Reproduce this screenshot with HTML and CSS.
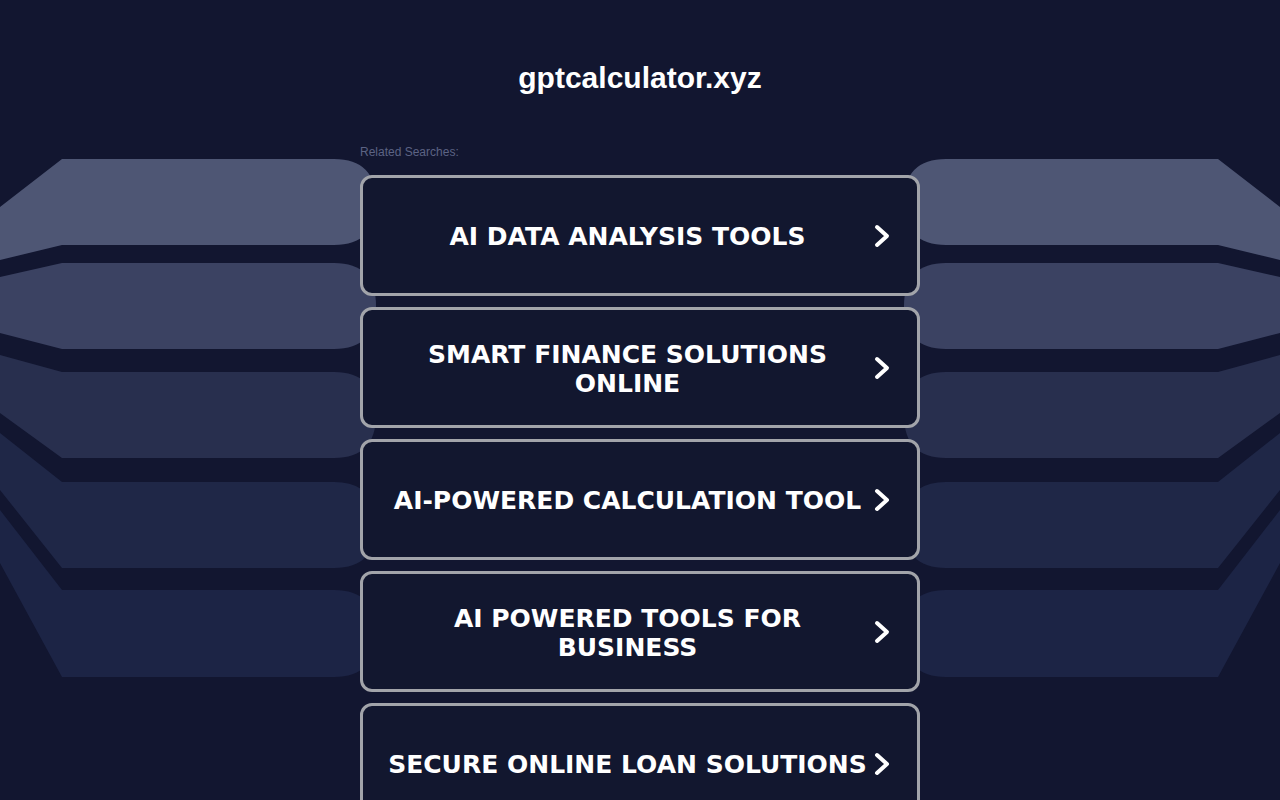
FILE: index.html
```html
<!DOCTYPE html>
<html lang="en">
<head>
<meta charset="utf-8">
<title>gptcalculator.xyz</title>
<link rel="stylesheet" href="styles.css">
</head>
<body>
<svg class="backdrop" width="1280" height="800" viewBox="0 0 1280 800" aria-hidden="true">
  <defs>
    <g id="plates">
      <path fill="#4e5674" d="M0 207 L62 159 H334 Q376 159 376 202 Q376 245 334 245 H62 L0 260 Z"/>
      <path fill="#3b4262" d="M0 277 L62 263 H334 Q376 263 376 306 Q376 349 334 349 H62 L0 333 Z"/>
      <path fill="#282f4e" d="M0 355 L62 372 H334 Q376 372 376 415 Q376 458 334 458 H62 L0 413 Z"/>
      <path fill="#1f2747" d="M0 433 L62 482 H334 Q376 482 376 525 Q376 568 334 568 H62 L0 490 Z"/>
      <path fill="#1c2445" d="M0 510 L62 590 H334 Q376 590 376 633 Q376 677 334 677 H62 L0 563 Z"/>
    </g>
  </defs>
  <use href="#plates"/>
  <use href="#plates" transform="translate(1280 0) scale(-1 1)"/>
</svg>

<main class="page">
  <h1 class="site-title">gptcalculator.xyz</h1>
  <p class="related">Related Searches:</p>
  <ul class="links">
    <li><a class="card" href="#"><span class="card-text">AI DATA ANALYSIS TOOLS</span><svg class="chev" width="16" height="24" viewBox="0 0 16 24"><path d="M3 3 L13 12 L3 21"/></svg></a></li>
    <li><a class="card" href="#"><span class="card-text">SMART FINANCE SOLUTIONS ONLINE</span><svg class="chev" width="16" height="24" viewBox="0 0 16 24"><path d="M3 3 L13 12 L3 21"/></svg></a></li>
    <li><a class="card" href="#"><span class="card-text">AI-POWERED CALCULATION TOOL</span><svg class="chev" width="16" height="24" viewBox="0 0 16 24"><path d="M3 3 L13 12 L3 21"/></svg></a></li>
    <li><a class="card" href="#"><span class="card-text">AI POWERED TOOLS FOR BUSINESS</span><svg class="chev" width="16" height="24" viewBox="0 0 16 24"><path d="M3 3 L13 12 L3 21"/></svg></a></li>
    <li><a class="card" href="#"><span class="card-text">SECURE ONLINE LOAN SOLUTIONS</span><svg class="chev" width="16" height="24" viewBox="0 0 16 24"><path d="M3 3 L13 12 L3 21"/></svg></a></li>
  </ul>
</main>
</body>
</html>
```

FILE: styles.css
```css
html, body {
  margin: 0;
  padding: 0;
  background: #121630;
  overflow: hidden;
  height: 800px;
}

body {
  position: relative;
  font-family: "Liberation Sans", Arial, sans-serif;
}

.backdrop {
  position: absolute;
  left: 0;
  top: 0;
  z-index: 0;
}

.page {
  position: relative;
  z-index: 1;
  width: 560px;
  margin: 0 auto;
}

.site-title {
  margin: 0;
  padding-top: 61px;
  font-family: "Liberation Sans", Arial, sans-serif;
  font-weight: 700;
  font-size: 30px;
  line-height: 34px;
  color: #ffffff;
  text-align: center;
}

.related {
  margin: 50px 0 16px;
  font-size: 12px;
  line-height: 14px;
  color: #5c6384;
}

.links {
  list-style: none;
  margin: 0;
  padding: 0;
}

.links li {
  margin-bottom: 11px;
}

.card {
  display: flex;
  align-items: center;
  box-sizing: border-box;
  height: 121px;
  padding: 0 27px 0 24px;
  border: 3px solid #a2a4aa;
  border-radius: 12px;
  background: #12172f;
  text-decoration: none;
  color: #ffffff;
}

.card-text {
  flex: 1;
  text-align: center;
  font-family: "DejaVu Sans", Verdana, sans-serif;
  font-weight: 700;
  font-size: 25px;
  line-height: 29px;
  padding-top: 2px;
}

.chev {
  flex: none;
  margin-left: 6px;
}

.chev path {
  fill: none;
  stroke: #ffffff;
  stroke-width: 4;
  stroke-linecap: round;
  stroke-linejoin: round;
}
```
